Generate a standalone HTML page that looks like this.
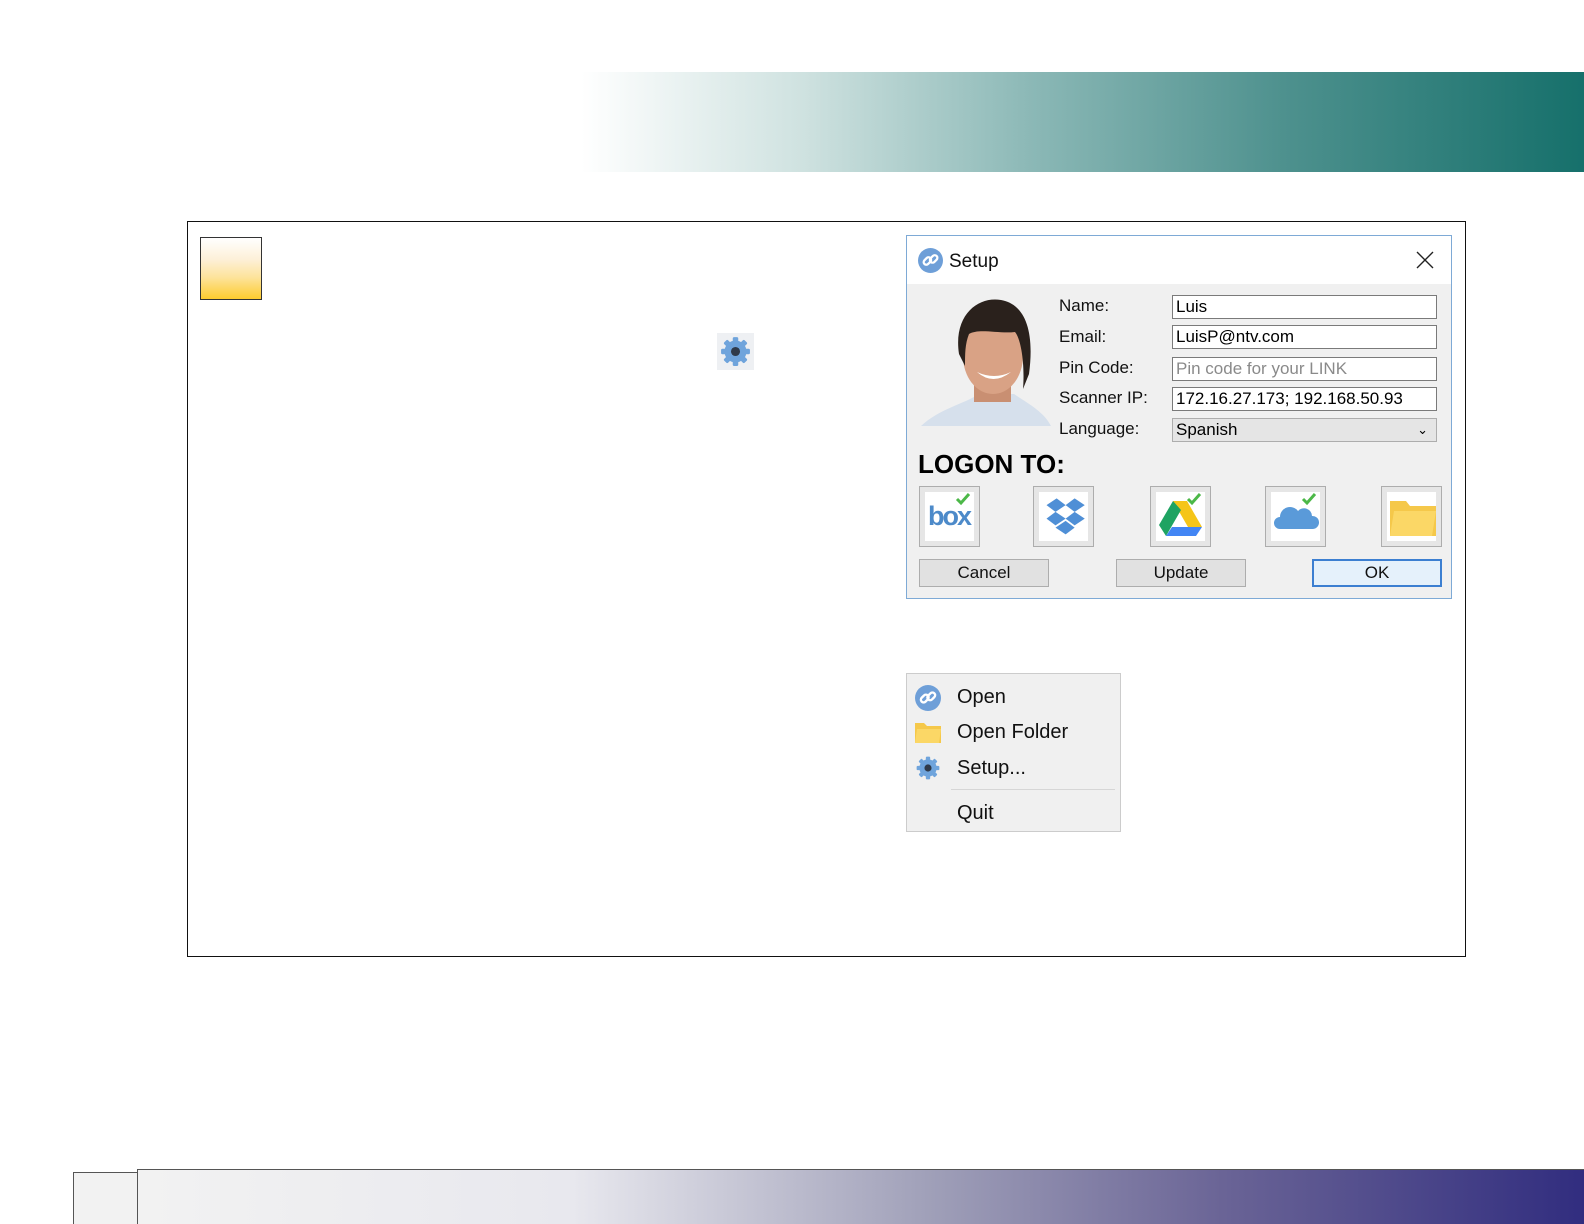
<!DOCTYPE html>
<html><head><meta charset="utf-8"><style>
*{margin:0;padding:0;box-sizing:border-box}
body{width:1584px;height:1224px;background:#fff;position:relative;overflow:hidden;font-family:"Liberation Sans",sans-serif}
.a{position:absolute}
.banner{left:581px;top:72px;width:1003px;height:100px;background:linear-gradient(90deg,#fff 0%,#cfe2e0 22%,#8bb8b6 45%,#4e918e 70%,#16706b 100%)}
.bot{left:137px;top:1169px;width:1447px;height:55px;border-top:1px solid #555;border-left:1px solid #555;background:linear-gradient(90deg,#f2f2f2 0%,#e8e8ee 30%,#9f9fb8 55%,#6a6496 75%,#312d7f 100%)}
.bbox{left:73px;top:1172px;width:64px;height:52px;border-top:1px solid #555;border-left:1px solid #555;background:#f2f2f2}
.frame{left:187px;top:221px;width:1279px;height:736px;border:1px solid #111}
.ybox{left:200px;top:237px;width:62px;height:63px;border:1px solid #333;background:linear-gradient(#fff 0%,#fdf0d8 35%,#fde39a 65%,#fdcb2e 100%)}
.dlg{left:906px;top:235px;width:546px;height:364px;border:1px solid #7eaad6;background:#f0f0f0}
.title{left:0;top:0;width:544px;height:48px;background:#fff}
.lbl{font-size:17px;color:#111}
.fld{height:24px;border:1px solid #7a7a7a;background:#fff;font-size:17px;padding-left:3px;line-height:22px;color:#000}
.ib{width:61px;height:61px;border:1px solid #adadad;background:#e6e6e6}
.ib .in{position:absolute;left:5px;top:5px;width:49px;height:49px;background:#fff}
.btn{height:28px;border:1px solid #adadad;background:#e1e1e1;font-size:17px;text-align:center;line-height:26px;color:#111}
.menu{left:906px;top:673px;width:215px;height:159px;background:#f0f0f0;border:1px solid #ccc}
.mi{font-size:20px;color:#111;left:50px}
</style></head><body>
<div class="a banner"></div>
<div class="a bbox"></div>
<div class="a bot"></div>
<div class="a frame"></div>
<div class="a ybox"></div>
<div class="a" style="left:717px;top:333px;width:37px;height:37px;background:#eef0f3"></div>
<svg class="a" style="left:719px;top:335px" width="33" height="33" viewBox="0 0 24 24"><g fill="#6fa4dc"><circle cx="12" cy="12" r="8"/><g id="t"><rect x="10" y="1.5" width="4" height="5" rx="1"/></g><use href="#t" transform="rotate(45 12 12)"/><use href="#t" transform="rotate(90 12 12)"/><use href="#t" transform="rotate(135 12 12)"/><use href="#t" transform="rotate(180 12 12)"/><use href="#t" transform="rotate(225 12 12)"/><use href="#t" transform="rotate(270 12 12)"/><use href="#t" transform="rotate(315 12 12)"/></g><circle cx="12" cy="12" r="3.3" fill="#2f3a4a"/></svg>

<div class="a dlg">
 <div class="a title"></div>
 <svg class="a" style="left:11px;top:12px" width="25" height="25" viewBox="0 0 24 24"><circle cx="12" cy="12" r="12" fill="#6e9fd8"/><g fill="none" stroke="#fff" stroke-width="2.2"><rect x="5" y="10" width="8" height="5" rx="2.5" transform="rotate(-45 9 12.5)"/><rect x="11" y="8" width="8" height="5" rx="2.5" transform="rotate(-45 15 10.5)"/></g></svg>
 <div class="a" style="left:42px;top:15px;font-size:19px;color:#111">Setup</div>
 <svg class="a" style="left:509px;top:15px" width="18" height="18" viewBox="0 0 18 18"><path d="M1 1L17 17M17 1L1 17" stroke="#222" stroke-width="1.4"/></svg>
 <svg class="a" style="left:12px;top:58px" width="134" height="135" viewBox="0 0 134 135">
  <path d="M2 132 C20 115 45 110 60 100 L95 100 C110 110 125 118 132 132Z" fill="#d6e0ec"/>
  <path d="M55 88 L55 108 L92 108 L92 86Z" fill="#c98f72"/>
  <ellipse cx="74" cy="62" rx="30" ry="38" fill="#d9a285"/>
  <path d="M40 60 C34 20 60 2 82 6 C105 10 116 35 110 80 L104 95 C106 70 102 45 96 38 C80 40 60 34 50 40 C46 50 46 60 46 72Z" fill="#2a211c"/>
  <path d="M58 78 Q74 92 92 78 Q75 86 58 78Z" fill="#fff"/>
 </svg>
 <div class="a lbl" style="left:152px;top:60px">Name:</div>
 <div class="a lbl" style="left:152px;top:91px">Email:</div>
 <div class="a lbl" style="left:152px;top:122px">Pin Code:</div>
 <div class="a lbl" style="left:152px;top:152px">Scanner IP:</div>
 <div class="a lbl" style="left:152px;top:183px">Language:</div>
 <div class="a fld" style="left:265px;top:59px;width:265px">Luis</div>
 <div class="a fld" style="left:265px;top:89px;width:265px">LuisP@ntv.com</div>
 <div class="a fld" style="left:265px;top:121px;width:265px;color:#8a8a8a">Pin code for your LINK</div>
 <div class="a fld" style="left:265px;top:151px;width:265px">172.16.27.173; 192.168.50.93</div>
 <div class="a fld" style="left:265px;top:182px;width:265px;background:#e5e5e5;border-color:#adadad">Spanish<span style="position:absolute;right:8px;top:0;font-size:13px">&#8964;</span></div>
 <div class="a" style="left:11px;top:213px;font-size:26px;font-weight:bold;color:#000">LOGON TO:</div>
 <div class="a ib" style="left:12px;top:250px"><div class="in"></div>
  <div class="a" style="left:8px;top:14px;font-size:27px;color:#4d8ac9;font-weight:bold;letter-spacing:-2px">box</div>
  <svg class="a" style="left:35px;top:5px" width="16" height="14"><path d="M2 7l4 4 8-9" stroke="#4cb848" stroke-width="3" fill="none"/></svg></div>
 <div class="a ib" style="left:126px;top:250px"><div class="in"></div>
  <svg class="a" style="left:8px;top:8px" width="45" height="45" viewBox="0 0 40 40"><g fill="#4f8fd6"><path d="M4 9l9-6 8 6-9 6z"/><path d="M21 9l8-6 9 6-9 6z"/><path d="M4 21l8-6 9 6-9 6z"/><path d="M21 21l8-6 9 6-9 6z"/><path d="M12 29l9-6 8 6-8 6z"/></g></svg></div>
 <div class="a ib" style="left:243px;top:250px"><div class="in"></div>
  <svg class="a" style="left:8px;top:10px" width="45" height="40" viewBox="0 0 45 40"><path d="M14 4h14l15 26H29z" fill="#f5c518"/><path d="M14 4L0 28l7 11 15-26z" fill="#1ea362"/><path d="M7 39h30l6-9H13z" fill="#4285f4"/></svg>
  <svg class="a" style="left:35px;top:5px" width="16" height="14"><path d="M2 7l4 4 8-9" stroke="#4cb848" stroke-width="3" fill="none"/></svg></div>
 <div class="a ib" style="left:358px;top:250px"><div class="in"></div>
  <svg class="a" style="left:8px;top:14px" width="45" height="30" viewBox="0 0 45 30"><path d="M6 28a6 6 0 0 1 0-12 10 10 0 0 1 18-6 8 8 0 0 1 14 5 6.5 6.5 0 0 1 1 13z" fill="#5a9ad9"/></svg>
  <svg class="a" style="left:35px;top:5px" width="16" height="14"><path d="M2 7l4 4 8-9" stroke="#4cb848" stroke-width="3" fill="none"/></svg></div>
 <div class="a ib" style="left:474px;top:250px"><div class="in"></div>
  <svg class="a" style="left:6px;top:10px" width="50" height="42" viewBox="0 0 50 42"><path d="M2 4h16l4 5h26v30H2z" fill="#f5c84a"/><path d="M6 14h42l-4 25H2z" fill="#fbd766"/></svg></div>
 <div class="a btn" style="left:12px;top:323px;width:130px">Cancel</div>
 <div class="a btn" style="left:209px;top:323px;width:130px">Update</div>
 <div class="a btn" style="left:405px;top:323px;width:130px;border:2px solid #3c7fd1;background:#e5f1fb;line-height:24px">OK</div>
</div>

<div class="a menu">
 <svg class="a" style="left:8px;top:11px" width="26" height="26" viewBox="0 0 24 24"><circle cx="12" cy="12" r="12" fill="#6e9fd8"/><g fill="none" stroke="#fff" stroke-width="2.2"><rect x="5" y="10" width="8" height="5" rx="2.5" transform="rotate(-45 9 12.5)"/><rect x="11" y="8" width="8" height="5" rx="2.5" transform="rotate(-45 15 10.5)"/></g></svg>
 <div class="a mi" style="top:12px">Open</div>
 <svg class="a" style="left:8px;top:49px" width="26" height="20" viewBox="0 0 26 20"><path d="M0 0h9l3 3h14v17H0z" fill="#f5c84a"/><path d="M2 6h24l-2 14H0z" fill="#fbd766"/></svg>
 <div class="a mi" style="top:47px">Open Folder</div>
 <svg class="a" style="left:8px;top:81px" width="26" height="26" viewBox="0 0 24 24"><g fill="#6fa4dc"><circle cx="12" cy="12" r="8"/><rect x="10" y="1.5" width="4" height="5" rx="1"/><rect x="10" y="1.5" width="4" height="5" rx="1" transform="rotate(45 12 12)"/><rect x="10" y="1.5" width="4" height="5" rx="1" transform="rotate(90 12 12)"/><rect x="10" y="1.5" width="4" height="5" rx="1" transform="rotate(135 12 12)"/><rect x="10" y="1.5" width="4" height="5" rx="1" transform="rotate(180 12 12)"/><rect x="10" y="1.5" width="4" height="5" rx="1" transform="rotate(225 12 12)"/><rect x="10" y="1.5" width="4" height="5" rx="1" transform="rotate(270 12 12)"/><rect x="10" y="1.5" width="4" height="5" rx="1" transform="rotate(315 12 12)"/></g><circle cx="12" cy="12" r="3.3" fill="#2f3a4a"/></svg>
 <div class="a mi" style="top:83px">Setup...</div>
 <div class="a" style="left:44px;top:115px;width:164px;height:1px;background:#d6d6d6"></div>
 <div class="a mi" style="top:128px">Quit</div>
</div>
</body></html>
